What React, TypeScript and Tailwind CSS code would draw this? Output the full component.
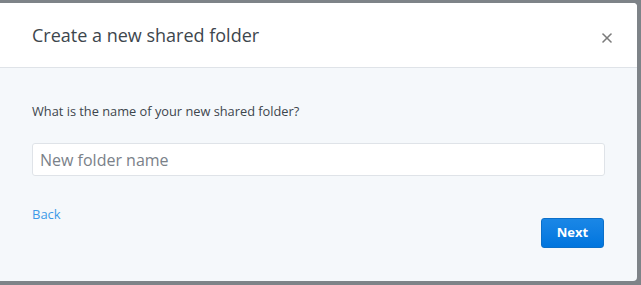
import { X } from "lucide-react";

function App() {
  return (
    <div
      className="w-[641px] h-[285px] bg-[#7e8388] pt-[3px] pr-[4px] pb-[4px] overflow-hidden"
      style={{ fontFamily: '"Open Sans", "Noto Sans", sans-serif' }}
    >
      <div className="h-[278px] bg-[#f5f8fb] rounded-r-[4px] overflow-hidden flex flex-col">
        <header className="h-[65px] shrink-0 bg-white border-b border-[#dfe3e8] flex items-center justify-between pl-8 pr-[22px]">
          <h1 className="text-[18px] text-[#3d464d] leading-none pb-[1px]">
            Create a new shared folder
          </h1>
          <button className="text-[#7b7b7b] mt-[5px]">
            <X size={16} strokeWidth={2.4} />
          </button>
        </header>

        <div className="flex-1 px-8 pt-[34px]">
          <p className="text-[12.8px] text-[#3d464d] leading-[18px]">
            What is the name of your new shared folder?
          </p>
          <input
            type="text"
            placeholder="New folder name"
            className="mt-[23px] w-[573px] h-[33px] bg-white border border-[#dfe3e8] rounded-[3px] px-[7px] text-[16px] text-[#3d464d] placeholder:text-[#7a8189] outline-none"
          />
          <div className="flex justify-between mt-[29px]">
            <a className="text-[13px] text-[#3d9ae8] leading-[18px] cursor-pointer">
              Back
            </a>
            <button className="mt-[13px] mr-[1px] w-[63px] h-[30px] rounded-[3px] bg-gradient-to-b from-[#1a87e6] to-[#0075de] border border-[#0b6fc9] text-white text-[13px] font-bold">
              Next
            </button>
          </div>
        </div>
      </div>
    </div>
  );
}

export default App;
